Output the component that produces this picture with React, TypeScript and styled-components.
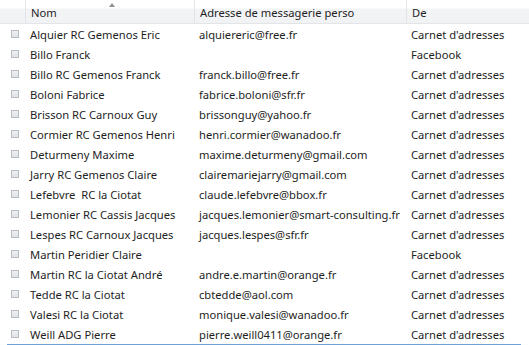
import styled, { createGlobalStyle } from "styled-components";

const GlobalStyle = createGlobalStyle`
	body {
		margin: 0;
		background: #ffffff;
		font-family: "Noto Sans", "Open Sans", sans-serif;
	}
`;

const Table = styled.div`
	width: 529px;
	height: 345px;
	overflow: hidden;
	background: #fff;
	font-size: 11.2px;
	color: #1e1e1e;
`;

const Grid = styled.div`
	display: grid;
	grid-template-columns: 25px 169px 212px 1fr;
`;

const HeaderRow = styled(Grid)`
	height: 24px;
	background: linear-gradient(#ffffff 0, #ffffff 8px, #f3f4f6 9px, #f1f2f4 23px);
	border-bottom: 1px solid #e3e5e9;
	box-sizing: border-box;
`;

const HeaderCell = styled.div<{ $divider?: boolean }>`
	position: relative;
	display: flex;
	align-items: center;
	padding: 2px 0 0 5px;
	border-left: ${(p) => (p.$divider ? "1px solid #e2e4e8" : "none")};
	white-space: nowrap;
`;

const SortArrow = styled.span`
	position: absolute;
	top: 3px;
	left: 83px;
	width: 0;
	height: 0;
	border-left: 3px solid transparent;
	border-right: 3px solid transparent;
	border-bottom: 4px solid #8c8f96;
`;

const Row = styled(Grid)`
	height: 20px;
	align-items: center;
`;

const CheckCell = styled.div`
	display: flex;
	align-items: center;
	justify-content: center;
	padding-left: 4px;
`;

const Check = styled.span`
	width: 6px;
	height: 6px;
	border: 1px solid #b8bcc4;
	background: linear-gradient(#f0f1f3, #dfe2e6);
`;

const Cell = styled.div`
	padding-left: 5px;
	white-space: pre;
	overflow: hidden;
`;

const BottomLine = styled.div`
	margin: 0 8px 0 7px;
	height: 1px;
	background: #6fa0d6;
`;

const contacts: [string, string, string][] = [
	["Alquier RC Gemenos Eric", "alquiereric@free.fr", "Carnet d'adresses"],
	["Billo Franck", "", "Facebook"],
	["Billo RC Gemenos Franck", "franck.billo@free.fr", "Carnet d'adresses"],
	["Boloni Fabrice", "fabrice.boloni@sfr.fr", "Carnet d'adresses"],
	["Brisson RC Carnoux Guy", "brissonguy@yahoo.fr", "Carnet d'adresses"],
	["Cormier RC Gemenos Henri", "henri.cormier@wanadoo.fr", "Carnet d'adresses"],
	["Deturmeny Maxime", "maxime.deturmeny@gmail.com", "Carnet d'adresses"],
	["Jarry RC Gemenos Claire", "clairemariejarry@gmail.com", "Carnet d'adresses"],
	["Lefebvre  RC la Ciotat", "claude.lefebvre@bbox.fr", "Carnet d'adresses"],
	["Lemonier RC Cassis Jacques", "jacques.lemonier@smart-consulting.fr", "Carnet d'adresses"],
	["Lespes RC Carnoux Jacques", "jacques.lespes@sfr.fr", "Carnet d'adresses"],
	["Martin Peridier Claire", "", "Facebook"],
	["Martin RC la Ciotat André", "andre.e.martin@orange.fr", "Carnet d'adresses"],
	["Tedde RC la Ciotat", "cbtedde@aol.com", "Carnet d'adresses"],
	["Valesi RC la Ciotat", "monique.valesi@wanadoo.fr", "Carnet d'adresses"],
	["Weill ADG Pierre", "pierre.weill0411@orange.fr", "Carnet d'adresses"],
];

export default function App() {
	return (
		<>
			<GlobalStyle />
			<Table>
				<HeaderRow>
					<HeaderCell />
					<HeaderCell $divider>
						Nom
						<SortArrow />
					</HeaderCell>
					<HeaderCell $divider>Adresse de messagerie perso</HeaderCell>
					<HeaderCell $divider>De</HeaderCell>
				</HeaderRow>
				{contacts.map(([name, mail, source]) => (
					<Row key={name}>
						<CheckCell>
							<Check />
						</CheckCell>
						<Cell>{name}</Cell>
						<Cell>{mail}</Cell>
						<Cell>{source}</Cell>
					</Row>
				))}
				<BottomLine />
			</Table>
		</>
	);
}
